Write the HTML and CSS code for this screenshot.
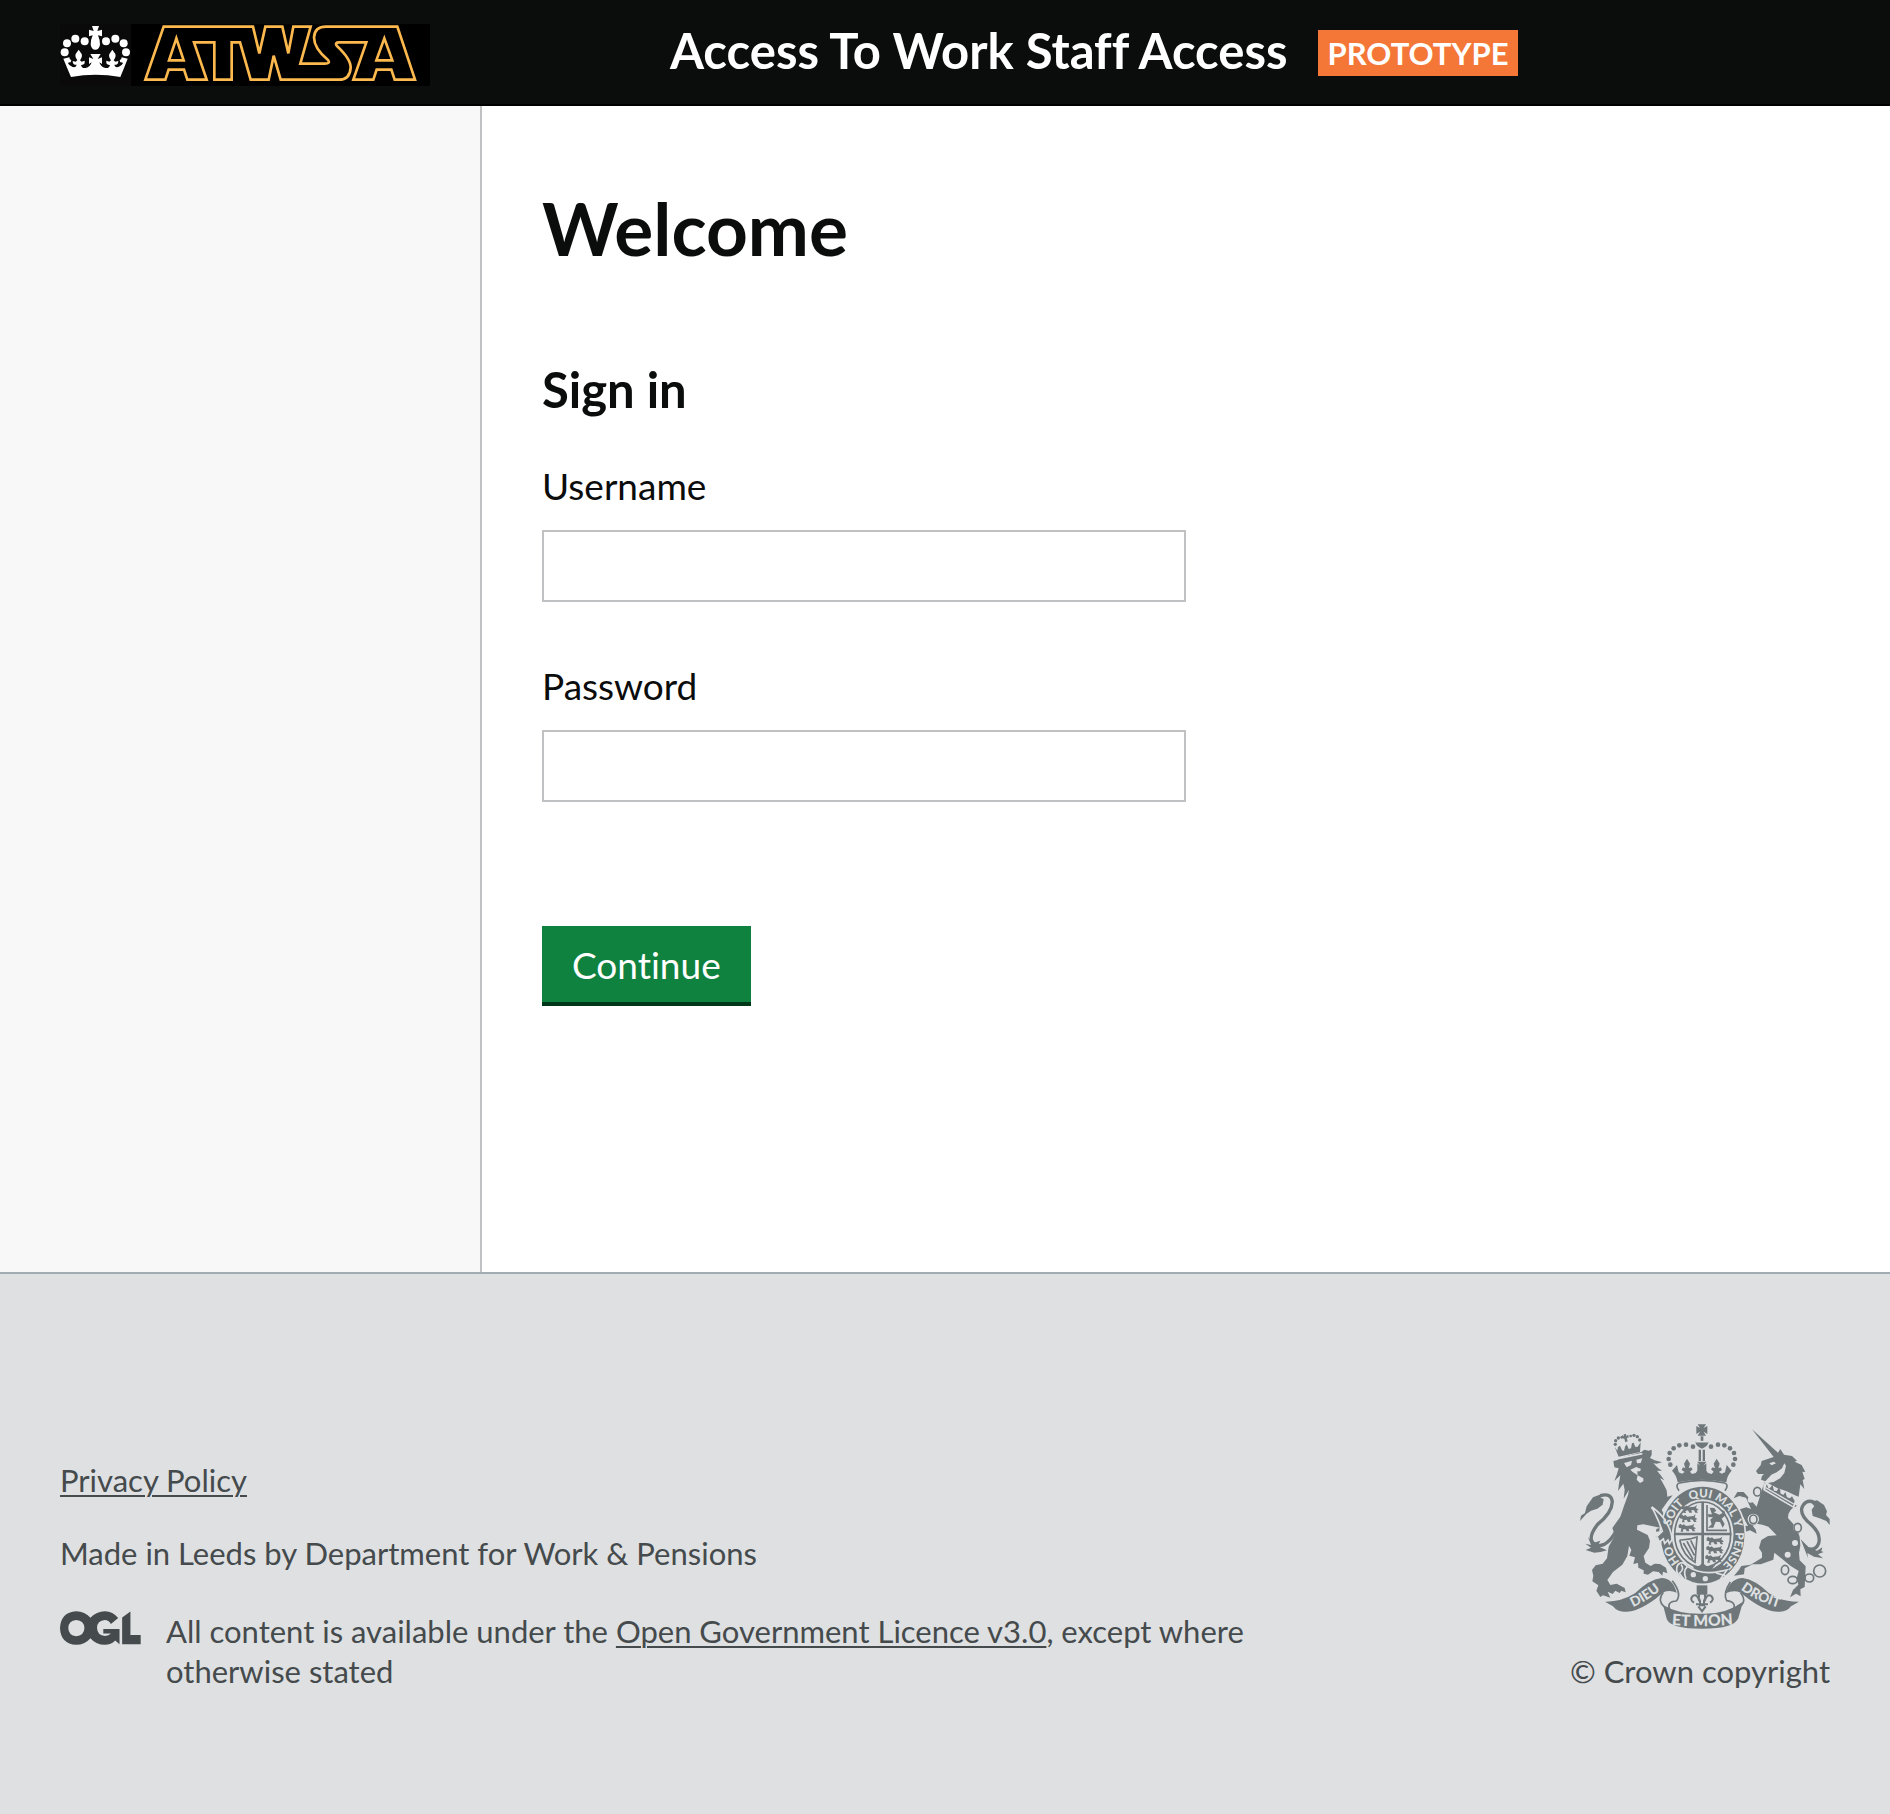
FILE: index.html
```html
<!DOCTYPE html>
<html lang="en">
<head>
  <meta charset="utf-8">
  <meta name="viewport" content="width=device-width, initial-scale=1">
  <title>Access To Work Staff Access</title>
  <link rel="stylesheet" href="styles.css">
</head>
<body>
  <header class="header">
    <a class="header-logo" href="#" aria-label="ATWSA home">
      <svg class="logo" viewBox="60 72 1110 186" aria-hidden="true">
        <rect class="logo-crown-bg" x="60" y="72" width="213" height="186"/>
        <rect class="logo-word-bg" x="273" y="72" width="897" height="186"/>
        <g class="logo-crown">
          <circle cx="74" cy="157" r="12"/><circle cx="81" cy="130" r="12"/>
          <circle cx="106" cy="116" r="12"/><circle cx="134" cy="124" r="12"/>
          <circle cx="198" cy="124" r="12"/><circle cx="226" cy="116" r="12"/>
          <circle cx="251" cy="130" r="12"/><circle cx="258" cy="157" r="12"/>
          <path d="M156 78H177L172 93L186 89V109L174 106Q181 122 180 134Q177 149 166 149Q155 149 152 134Q151 122 158 106L147 109V89L161 93Z"/>
          <path d="M70 176L88 172Q88 180 94 181L92 187Q86 186 84 190Q92 201 103 202Q109 201 110 194Q103 196 99 190L98 183L107 185L112 181Q104 170 107 162L116 149L125 162Q128 170 120 181L125 185L134 182L134 190Q130 196 123 195Q125 206 137 204Q151 201 155 187L147 192V172L160 177L151 162H182L173 177L186 172V192L178 187Q182 201 196 204Q208 206 210 195Q203 196 199 190L199 182L208 185L213 181Q205 170 208 162L217 149L226 162Q229 170 221 181L226 185L235 183L234 190Q230 196 223 194Q224 201 230 202Q241 201 249 190Q247 186 241 187L239 181Q245 180 245 172L263 176Q253 202 241 231Q166 217 93 231Q81 203 70 176Z"/>
        </g>
        <path class="logo-word" d="M316 239L371 80H639L658 160L676 80H727L745 160L760 80H812L781 191H855Q872 191 864 180Q822 146 822 112Q824 80 858 80H1072L1125 239H1064L1054 209H1010L1000 239H940L979 127H897Q884 127 890 137Q932 176 932 202Q930 239 897 239H722L701 167L686 239H632L600 127H575V239H523V127H462L500 239H442L432 209H386L376 239ZM409 115L387 181H431ZM1033 115L1009 181H1057Z"/>
      </svg>
    </a>
    <div class="header-title">
      <span class="service-name">Access To Work Staff Access</span>
      <strong class="phase-tag">PROTOTYPE</strong>
    </div>
  </header>

  <div class="page">
    <aside class="sidebar" aria-label="Sidebar"></aside>
    <main class="content">
      <h1 class="page-title">Welcome</h1>
      <form class="sign-in" action="#" method="post">
        <h2 class="form-title">Sign in</h2>
        <div class="field">
          <label class="field-label" for="username">Username</label>
          <input class="field-input" id="username" name="username" type="text">
        </div>
        <div class="field">
          <label class="field-label" for="password">Password</label>
          <input class="field-input" id="password" name="password" type="password">
        </div>
        <button class="button" type="submit">Continue</button>
      </form>
    </main>
  </div>

  <footer class="footer">
    <div class="footer-meta">
      <p class="footer-privacy"><a class="footer-link" href="#">Privacy Policy</a></p>
      <p class="footer-made">Made in Leeds by Department for Work &amp; Pensions</p>
      <div class="licence">
        <svg class="ogl" viewBox="30 63 245 102" role="img" aria-label="Open Government Licence">
          <path fill-rule="evenodd" d="M79 63Q105 63 122 83Q140 63 166 63Q190 63 206 84L184 102Q177 90 166 90Q142 92 142 114Q143 137 166 138Q178 138 184 131H161V117H210V163L197 152Q184 165 166 165Q139 165 122 145Q105 165 79 165Q32 162 30 114Q32 66 79 63ZM79 90Q56 92 55 114Q56 137 79 139Q103 137 104 114Q103 92 79 90Z"/>
          <path d="M218 82L243 64V135H274V163H218Z"/>
        </svg>
        <p class="licence-text">All content is available under the <a class="footer-link" href="#">Open Government Licence v3.0</a>, except where otherwise stated</p>
      </div>
    </div>
    <a class="copyright" href="#">
      <svg class="crest" viewBox="60 40 750 615" aria-hidden="true">
        <defs>
          <path id="garter-line" d="M428 486A98 113 0 0 1 428 260A98 113 0 0 1 428 486"/>
          <path id="dieu-line" d="M203 596Q262 574 314 527"/>
          <path id="mon-line" d="M320 642Q427 652 534 640"/>
          <path id="droit-line" d="M534 530Q590 574 666 594"/>
          <g id="passant">
            <path d="M0 4L6 0L10 5L16 2L22 7L40 5L47 0L44 9L52 14L46 17L50 23H42L38 16L30 15L32 23H24L20 16L12 18L14 24H6L8 14L0 12Z"/>
          </g>
        </defs>

        <!-- lion -->
        <g class="crest-fill">
          <circle cx="166" cy="101" r="5"/><circle cx="167" cy="90" r="5"/><circle cx="175" cy="82" r="5"/><circle cx="185" cy="80" r="4"/>
          <circle cx="239" cy="88" r="5"/><circle cx="232" cy="78" r="5"/><circle cx="222" cy="74" r="5"/><circle cx="212" cy="76" r="4"/>
          <path d="M186 73L192 77L191 71L198 70L199 76L205 72L206 81L200 81L203 92L196 95L193 84L187 83Z"/>
          <path d="M164 108L172 120L174 109L180 105L186 119L192 121L195 108L200 101L206 115L213 113L216 98L221 96L226 109L233 108L242 95L240 124L176 138Z"/>
          <path d="M160 151L173 148L181 141L244 124L253 117L266 120L275 117L275 132L270 142L284 149L306 155L290 159L280 158L294 172L306 180L291 180L301 192L313 209L300 202L309 218L320 239L322 258L338 254L322 273L305 297L319 326L331 354L337 387L328 397L326 386L317 397L313 387L300 395L304 384L287 379L300 372L306 361L288 363L289 355L300 351L286 348L250 341L232 344L231 357L263 373L270 390L267 412L251 436L256 456L272 466L284 459L300 460L318 471L322 488L309 483L307 495L296 484L279 482L264 492L251 489L251 479L235 471L234 457L220 460L225 440L208 435L214 418L207 405L202 436L187 462L159 484L142 508L151 523L170 519L194 532L197 545L184 540L179 547L166 540L158 550L143 543L151 561L129 554L121 559L109 540L115 524L97 512L100 495L96 478L107 464L128 459L141 443L146 408L165 374L157 352L181 318L193 283L204 253L207 237L191 264L194 237L190 219L174 241L177 218L181 194L163 211L171 190L176 173L163 170Z"/>
          <path d="M60 331L63 315L75 307L80 287L99 260L127 249L122 261L131 265L128 282L112 294L93 300L79 310Z"/>
          <path d="M84 379L99 397L121 390L113 407L141 419L122 424L103 426L77 418L93 411L76 399L93 403Z"/>
        </g>
        <path class="crest-line tail" d="M121 255Q153 245 157 273Q156 307 112 342Q87 375 96 392Q106 412 133 401Q154 389 168 361"/>
        <g class="crest-cut">
          <path d="M192 157L216 150L213 163L200 170ZM229 147L247 143L242 157L231 158ZM211 177L229 169L243 175L240 182L232 182L233 194L250 203L250 212L240 217L230 207L233 194L218 184Z"/>
          <path class="cut-line" d="M176 143L247 129M274 290L302 321"/>
        </g>

        <!-- unicorn -->
        <g class="crest-fill">
          <path d="M576 56L654 126L661 115L672 132L696 136L711 150L704 153L725 163L736 184L727 183L734 205L728 208L733 235L721 221L716 258L705 254L680 242L650 231L624 217L641 214L661 202L673 187L678 165L673 158L666 173L650 185L634 192L616 212L603 207L606 196L612 190L594 190L588 181L602 164L605 151L623 145L641 139Z"/>
          <path d="M613 215L711 286Q684 294 684 322L711 353L719 379L721 405L717 427L719 449L737 467L734 529L721 536L722 557L708 549L690 560L699 538L715 522L710 503L716 481L691 465L664 443L643 426L640 447L602 461L578 461L554 473L552 491L522 495L537 477L544 466L572 462L606 441L606 426L597 412L604 388L624 376L650 374L625 348L607 342L590 339L578 345L587 357L590 369L570 359L557 363L552 345L564 346L550 320L534 309L535 297L559 290L573 295L558 261L538 256L521 263L532 244L551 244L578 275L590 288Z"/>
          <path d="M722 386L749 413L771 420L787 410L784 422L791 424L774 431L789 443L762 438L742 427L744 442Z"/>
          <path d="M751 274L771 269L792 283L801 302L798 313L809 325V343L799 331L779 323L758 316L755 297L763 286Z"/>
        </g>
        <path class="crest-line tail" d="M762 274Q733 265 725 294Q722 317 754 342Q784 370 776 398Q767 421 744 414"/>
        <g class="crest-cut">
          <path d="M628 158L641 153L648 158L635 164ZM610 218L619 217L704 266L712 268L702 293L610 239Z"/>
          <circle cx="705" cy="397" r="9"/><circle cx="683" cy="432" r="9"/><circle cx="580" cy="326" r="17"/><circle cx="572" cy="267" r="9"/><circle cx="713" cy="351" r="14"/>
        </g>
        <g class="crest-fill">
          <path d="M620 220L626 234L633 229L637 221L642 240L651 241L655 231L661 237L661 248L670 253L676 244L681 260L690 263L696 257L704 271L699 286L616 236Z"/>
        </g>
        <path class="crest-line thin cut-stroke" d="M617 231L701 280"/>
        <g class="crest-line thin">
          <ellipse cx="592" cy="243" rx="11" ry="13"/><ellipse cx="580" cy="326" rx="11" ry="13"/><ellipse cx="713" cy="351" rx="11" ry="13"/>
          <ellipse cx="675" cy="478" rx="11" ry="14"/><ellipse cx="698" cy="508" rx="14" ry="11"/><ellipse cx="748" cy="502" rx="13" ry="12"/><circle cx="779" cy="481" r="18"/>
        </g>

        <!-- garter and shield -->
        <path class="crest-fill halo" fill-rule="evenodd" d="M428 226A128 147 0 0 1 428 520A128 147 0 0 1 428 226ZM428 268A90 104 0 0 0 428 476A90 104 0 0 0 428 268Z"/>
        <g class="crest-line thin">
          <ellipse cx="428" cy="372" rx="84" ry="98"/>
          <path class="bar" d="M428 274V470M342 370H514"/>
        </g>
        <path class="crest-fill" d="M398 467L414 468L428 457L442 468L466 462L452 480H407Z"/>
        <g class="crest-fill">
          <use href="#passant" x="364" y="283"/><use href="#passant" x="360" y="311"/><use href="#passant" x="356" y="339"/>
          <use href="#passant" x="440" y="378"/><use href="#passant" x="439" y="405"/><use href="#passant" x="436" y="432"/>
          <path d="M449 291L463 292L469 301L461 305L478 312L489 306L482 299L493 300L497 313L485 324L494 340L488 351L480 334L467 333L460 351L444 351L455 341L451 327L459 319L446 320L443 311L456 311Z"/>
        </g>
        <g class="crest-line thin">
          <path d="M441 283L441 359H501M359 388Q384 389 411 379L405 455Q370 437 359 388M370 397L399 446M381 392L403 434M392 389L406 418"/>
        </g>
        <path class="crest-fill halo" d="M350 475Q351 456 369 456L382 467Q424 494 480 482L501 478L480 507Q438 530 397 516L366 503Q349 492 350 475Z"/>
        <path class="cut-line" d="M363 462Q375 474 358 488L371 505M382 468Q368 482 378 504M468 487Q489 493 496 495"/>
        <g class="crest-cut"><circle cx="400" cy="492" r="8"/><circle cx="436" cy="504" r="8"/></g>

        <!-- lion's paw over the garter -->
        <path class="crest-fill halo" d="M276 289Q307 312 318 334Q335 361 336 387L328 399L324 388L314 398L310 385L298 394L291 377L307 362L296 332Z"/>

        <g class="crest-text garter-text">
          <text><textPath href="#garter-line" startOffset="16%">HO</textPath></text>
          <text><textPath href="#garter-line" startOffset="35%">SOIT</textPath></text>
          <text><textPath href="#garter-line" startOffset="49%">QUI</textPath></text>
          <text><textPath href="#garter-line" startOffset="61%">MAL</textPath></text>
          <text><textPath href="#garter-line" startOffset="70%">Y</textPath></text>
          <text><textPath href="#garter-line" startOffset="82%">PENSE</textPath></text>
        </g>

        <!-- royal crown -->
        <g class="crest-fill">
          <path d="M413 41H438L431 52L442 46V70L431 63L438 75H413L420 63L409 70V46L420 52Z"/>
          <path d="M422 77H430V92H446Q444 108 426 114Q407 108 406 92H422Z"/>
          <circle cx="399" cy="108" r="7"/><circle cx="378" cy="102" r="7"/><circle cx="358" cy="104" r="7"/><circle cx="341" cy="113" r="7"/><circle cx="329" cy="127" r="7"/><circle cx="326" cy="145" r="7"/><circle cx="331" cy="162" r="7"/>
          <circle cx="453" cy="108" r="7"/><circle cx="474" cy="102" r="7"/><circle cx="493" cy="104" r="7"/><circle cx="510" cy="113" r="7"/><circle cx="522" cy="127" r="7"/><circle cx="525" cy="145" r="7"/><circle cx="520" cy="162" r="7"/>
          <path d="M416 117H423V151H416ZM428 117H435V151H428Z"/>
          <path d="M336 180L351 163L356 185L366 189L374 184L365 178L369 170L376 173L372 159L381 144L390 159L386 173L393 170L398 176L390 183L396 190L407 187L412 180V158L421 166L412 153H439L430 166L439 158V180L444 187L455 190L461 183L453 176L458 170L465 173L461 159L470 144L479 159L475 173L482 170L486 178L477 184L485 189L495 185L500 163L515 180Q501 194 499 215Q426 199 353 215Q350 194 336 180Z"/>
        </g>
        <path class="crest-line thin" d="M357 240Q344 222 358 217Q426 201 494 217Q508 222 495 240"/>
        <path class="cut-line" d="M406 93H446"/>

        <!-- ribbon -->
        <g class="crest-fill">
          <path d="M135 573Q183 574 225 548Q266 507 305 502Q338 502 350 546Q329 537 310 545L286 565Q229 606 194 603Q172 604 159 587Z"/>
          <path d="M717 573Q669 574 627 548Q586 507 548 502Q512 502 497 548Q521 537 542 546L566 565Q623 606 658 603Q680 604 693 587Z"/>
          <path d="M309 583Q356 611 427 609Q498 611 549 573L535 622Q524 654 427 654Q329 654 320 624Z"/>
          <path d="M410 524H442V552H410Z"/>
        </g>
        <g class="crest-line thin">
          <path d="M310 545Q291 569 312 588M337 510Q367 550 349 571Q319 573 329 596M542 546Q560 569 543 586M511 514Q488 548 500 570Q532 574 519 600"/>
          <path class="fleur" d="M426 538Q410 554 420 570V584H432V570Q442 554 426 538ZM418 572Q412 548 398 556Q388 568 402 576M434 572Q440 548 454 556Q464 568 450 576M408 581H444M415 587L426 602L437 587"/>
        </g>
        <g class="crest-text">
          <text class="motto"><textPath href="#dieu-line" startOffset="50%">DIEU</textPath></text>
          <text class="motto"><textPath href="#droit-line" startOffset="50%">DROIT</textPath></text>
          <text class="motto motto-mid"><textPath href="#mon-line" startOffset="50%">ET MON</textPath></text>
        </g>
      </svg>
      <span>© Crown copyright</span>
    </a>
  </footer>
</body>
</html>
```
FILE: styles.css
```css
:root {
  --black: #0b0c0c;
  --border: #bfc1c3;
  --footer-bg: #dee0e2;
  --footer-text: #454a4c;
  --crest: #6f777b;
}

* {
  box-sizing: border-box;
}

body {
  display: flex;
  flex-direction: column;
  min-height: 100vh;
  margin: 0;
  color: var(--black);
  background: #fff;
  font-family: Lato, "Liberation Sans", sans-serif;
  font-variant-ligatures: none;
}

h1, h2, p {
  margin: 0;
}

/* Header */
.header {
  display: flex;
  align-items: flex-start;
  gap: 240px;
  padding: 24px 60px 18px;
  background: var(--black);
  border-bottom: 2px solid #000;
}

.header-logo,
.logo {
  display: block;
  flex: none;
}

.logo {
  width: 370px;
  height: 62px;
}

.logo-crown-bg { fill: #0a0a0a; }
.logo-word-bg { fill: #000; }
.logo-crown { fill: #fff; }

.logo-word {
  fill: none;
  stroke: #fdb94d;
  stroke-width: 8;
}

.header-title {
  display: flex;
  align-items: flex-start;
  gap: 30px;
  color: #fff;
}

.service-name {
  font-size: 49px;
  font-weight: 700;
  line-height: 52px;
  white-space: nowrap;
}

.phase-tag {
  margin-top: 6px;
  padding: 0 10px;
  background: #f47738;
  font-size: 31px;
  line-height: 46px;
}

/* Page */
.page {
  display: flex;
  flex: 1;
}

.sidebar {
  flex: 0 0 482px;
  background: #f8f8f8;
  border-right: 2px solid var(--border);
}

.content {
  flex: 1;
  padding: 82px 60px 266px;
}

.page-title {
  font-size: 73px;
  line-height: 80px;
}

.sign-in {
  max-width: 644px;
  margin-top: 91px;
}

.form-title {
  margin-bottom: 42px;
  font-size: 49px;
  line-height: 60px;
}

.field {
  margin-bottom: 59px;
}

.field-label {
  display: block;
  margin-bottom: 19px;
  font-size: 37px;
  line-height: 50px;
}

.field-input {
  display: block;
  width: 100%;
  height: 72px;
  padding: 10px;
  border: 2px solid var(--border);
  border-radius: 0;
  background: #fff;
  color: inherit;
  font: inherit;
  font-size: 37px;
}

.button {
  display: block;
  height: 80px;
  margin-top: 124px;
  padding: 0 30px;
  border: 0;
  border-bottom: 4px solid #003618;
  background: #10823f;
  color: #fff;
  font: inherit;
  font-size: 37px;
  font-variant-ligatures: none;
}

/* Footer */
.footer {
  display: flex;
  align-items: flex-end;
  justify-content: space-between;
  padding: 150px 60px 123px;
  border-top: 2px solid #a1acb2;
  background: var(--footer-bg);
  color: var(--footer-text);
  font-size: 31px;
  line-height: 40px;
}

.footer-meta {
  max-width: 1220px;
}

.footer-link {
  color: inherit;
  text-decoration-thickness: 2px;
  text-underline-offset: 3px;
}

.footer-privacy {
  margin-bottom: 33px;
}

.footer-made {
  margin-bottom: 38px;
}

.licence {
  display: flex;
  align-items: flex-start;
  gap: 25px;
}

.ogl {
  flex: none;
  width: 81px;
  height: 34px;
  fill: var(--footer-text);
}

.copyright {
  display: flex;
  flex-direction: column;
  align-items: flex-end;
  gap: 22px;
  color: inherit;
  text-decoration: none;
  white-space: nowrap;
}

.crest {
  width: 250px;
  height: 205px;
}

.crest-fill { fill: var(--crest); }
.crest-cut { fill: var(--footer-bg); }

.crest-line {
  fill: none;
  stroke: var(--crest);
}

.tail { stroke-width: 10; }
.thin { stroke-width: 5; }
.bar { stroke-width: 8; }
.fleur { stroke-width: 6; }

.cut-line {
  fill: none;
  stroke: var(--footer-bg);
  stroke-width: 5;
}

.cut-stroke { stroke: var(--footer-bg); stroke-width: 4; }

.halo {
  stroke: var(--footer-bg);
  stroke-width: 5;
}

.crest-text {
  fill: var(--footer-bg);
  font-weight: 900;
  text-anchor: middle;
}

.garter-text { font-size: 35px; }
.motto { font-size: 41px; }
.motto-mid { font-size: 47px; }
```
